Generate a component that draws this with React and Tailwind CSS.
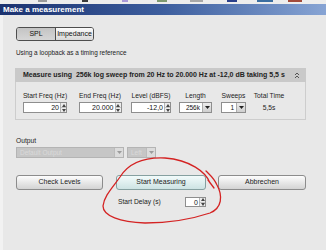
import React from 'react';

const Spin = () => (
  <div className="flex w-[6px] flex-col border-l border-[#b4b4b4] bg-[#ececec]">
    <div className="flex flex-1 items-center justify-center border-b border-[#c4c4c4]">
      <svg width="4" height="3" viewBox="0 0 4 3"><path d="M0 3L2 0L4 3Z" fill="#444" /></svg>
    </div>
    <div className="flex flex-1 items-center justify-center">
      <svg width="4" height="3" viewBox="0 0 4 3"><path d="M0 0L2 3L4 0Z" fill="#444" /></svg>
    </div>
  </div>
);

const NumInput = ({ value, className }) => (
  <div className={`flex border border-[#8e8e8e] bg-white ${className}`}>
    <div className="flex-1 pr-[1px] text-right text-[7px] leading-[9px] text-[#111]">{value}</div>
    <Spin />
  </div>
);

const Select = ({ value, className }) => (
  <div className={`flex h-[11px] border border-[#8e8e8e] bg-white ${className}`}>
    <div className="flex-1 pr-[2px] text-right text-[6.5px] leading-[9px] text-[#111]">{value}</div>
    <div className="flex w-[9px] items-center justify-center border-l border-[#acacac] bg-gradient-to-b from-[#ececec] to-[#cfcfcf]">
      <svg width="5" height="3" viewBox="0 0 5 3"><path d="M0 0H5L2.5 3Z" fill="#222" /></svg>
    </div>
  </div>
);

const Field = ({ label, className, children }) => (
  <div className={`flex flex-col items-center ${className}`}>
    <div className="h-[8px] whitespace-nowrap text-[6.7px] leading-[8px] text-[#222]">{label}</div>
    <div className="mt-[2px] flex h-[11px] w-full justify-center">{children}</div>
  </div>
);

export default function App() {
  return (
    <div className="relative flex h-[250px] w-[326px] flex-col overflow-hidden bg-[#e8e8e8] font-['Liberation_Sans',Arial,sans-serif]">
      {/* cut-off toolbar above the dialog */}
      <div className="flex h-[4px] items-start bg-[#ededed]">
        <div className="ml-[38px] h-[2px] w-[9px] bg-[#9a9a9a]" />
        <div className="ml-[35px] h-[2px] w-[6px] bg-[#3a3a3a]" />
        <div className="ml-[34px] h-[2px] w-[6px] bg-[#a99ad8]" />
        <div className="ml-[29px] h-[2px] w-[10px] bg-[#7f9a70]" />
        <div className="ml-[23px] h-[2px] w-[13px] bg-[#a8a8a8]" />
        <div className="ml-[24px] h-[2px] w-[10px] bg-[#2a3f8a]" />
        <div className="ml-[20px] h-[2px] w-[16px] bg-[#3b6ea0]" />
        <div className="ml-[15px] h-[2px] w-[14px] bg-[#a24a3a]" />
      </div>

      <div className="flex h-[11px] items-center bg-gradient-to-r from-[#1b3270] via-[#3d5e9e] to-[#87a4d4] pl-[3px]">
        <span className="text-[8px] font-bold leading-none text-white">Make a measurement</span>
      </div>

      <div className="flex flex-1 flex-col border-l-[3px] border-[#f2f2f2]">
        <div className="ml-[13px] mt-[12px] flex h-[14px] w-[78px] overflow-hidden rounded-[3px] border border-[#4e4e4e] text-[7px] text-[#111]">
          <div className="flex w-[38px] items-center justify-center bg-gradient-to-b from-[#c4c4c4] to-[#d6d6d6]">SPL</div>
          <div className="flex flex-1 items-center justify-center border-l border-[#4e4e4e] bg-gradient-to-b from-[#fbfbfb] to-[#d8d8d8]">Impedance</div>
        </div>

        <div className="ml-[13px] mt-[8px] h-[8px] text-[6.4px] leading-[8px] text-[#222]">Using a loopback as a timing reference</div>

        <div className="ml-[12px] mt-[11px] w-[291px]">
          <div className="flex h-[14px] items-center justify-between bg-[#c9c9c9] pl-[8px] pr-[6px]">
            <span className="whitespace-pre text-[7px] font-bold text-[#222]">Measure using  256k log sweep from 20 Hz to 20.000 Hz at -12,0 dB taking 5,5 s</span>
            <svg width="6" height="7" viewBox="0 0 6 7">
              <path d="M1 3L3 1L5 3M1 6L3 4L5 6" fill="none" stroke="#555" strokeWidth="1" />
            </svg>
          </div>
          <div className="box-border flex h-[38px] border border-t-0 border-[#cdcdcd] pl-[6px] pt-[10px]">
            <Field label="Start Freq (Hz)" className="w-[46px]">
              <NumInput value="20" className="w-[44px]" />
            </Field>
            <Field label="End Freq (Hz)" className="ml-[10px] w-[44px]">
              <NumInput value="20.000" className="w-[43px]" />
            </Field>
            <Field label="Level (dBFS)" className="ml-[8px] w-[42px]">
              <NumInput value="-12,0" className="w-[40px]" />
            </Field>
            <Field label="Length" className="ml-[7px] w-[33px]">
              <Select value="256k" className="w-[33px]" />
            </Field>
            <Field label="Sweeps" className="ml-[9px] w-[25px]">
              <Select value="1" className="w-[25px]" />
            </Field>
            <Field label="Total Time" className="ml-[7px] w-[32px]">
              <span className="text-[6.7px] leading-[11px] text-[#222]">5,5s</span>
            </Field>
          </div>
        </div>

        <div className="ml-[13px] mt-[17px] h-[8px] text-[6.7px] leading-[8px] text-[#222]">Output</div>
        <div className="ml-[13px] mt-[2px] flex h-[11px] gap-[3px]">
          <div className="flex w-[108px] border border-[#b4b4b4] bg-[#c6c6c6]">
            <div className="flex-1 pl-[3px] text-[6.5px] leading-[9px] text-[#dadada]">Default Output</div>
            <div className="flex w-[9px] items-center justify-center border-l border-[#bcbcbc] bg-[#dcdcdc]">
              <svg width="5" height="3" viewBox="0 0 5 3"><path d="M0 0H5L2.5 3Z" fill="#9c9c9c" /></svg>
            </div>
          </div>
          <div className="flex w-[29px] border border-[#b4b4b4] bg-[#c6c6c6]">
            <div className="flex-1 pl-[3px] text-[6.5px] leading-[9px] text-[#dadada]">Left</div>
            <div className="flex w-[9px] items-center justify-center border-l border-[#bcbcbc] bg-[#dcdcdc]">
              <svg width="5" height="3" viewBox="0 0 5 3"><path d="M0 0H5L2.5 3Z" fill="#9c9c9c" /></svg>
            </div>
          </div>
        </div>

        <div className="ml-[13px] mt-[17px] flex h-[15px] text-[7px] text-[#222]">
          <button className="flex w-[87px] items-center justify-center rounded-[3px] border border-[#8c8c8c] bg-gradient-to-b from-[#fdfdfd] to-[#d3d3d3]">Check Levels</button>
          <button className="ml-[13px] flex w-[90px] items-center justify-center rounded-[3px] border border-[#86a0a0] bg-gradient-to-b from-[#f2fbfb] to-[#cde3e3]">Start Measuring</button>
          <button className="ml-[12px] flex w-[88px] items-center justify-center rounded-[3px] border border-[#8c8c8c] bg-gradient-to-b from-[#fdfdfd] to-[#d3d3d3]">Abbrechen</button>
        </div>

        <div className="ml-[115px] mt-[7px] flex h-[10px] items-center">
          <span className="w-[67px] text-[6.7px] text-[#222]">Start Delay (s)</span>
          <NumInput value="0" className="h-[10px] w-[21px]" />
        </div>
      </div>

      <svg className="pointer-events-none absolute left-0 top-0" width="326" height="250" viewBox="0 0 326 250">
        <path
          d="M210 183 C206 172 190 160 165 158 C142 157 128 164 120 177 C113 187 104 196 103 206 C103 216 120 222 145 223 C170 223 195 218 210 213 C222 208 223 196 217 185 C214 178 210 175 206 171 M208 180 L214 188"
          fill="none"
          stroke="#d42323"
          strokeWidth="1.3"
          strokeLinecap="round"
        />
      </svg>
    </div>
  );
}
